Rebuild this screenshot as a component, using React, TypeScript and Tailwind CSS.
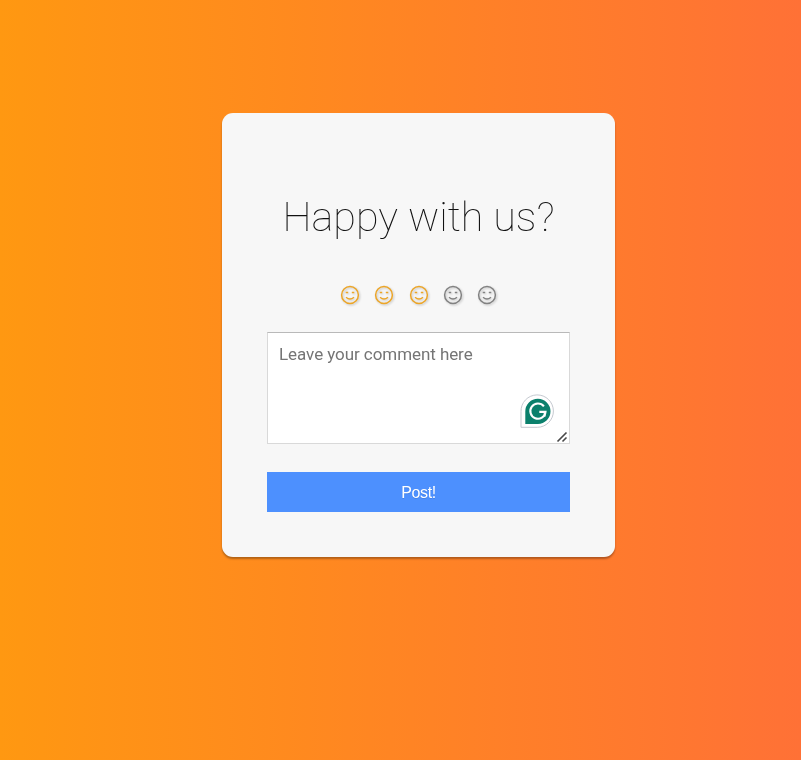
const RATING = 3;

function Smiley({ active }: { active: boolean }) {
  return (
    <svg
      viewBox="0 0 20 20"
      className={
        active
          ? "size-[20px] text-[#eca527] drop-shadow-[1px_1px_1px_rgba(0,0,0,0.22)]"
          : "size-[20px] text-[#828282] drop-shadow-[1px_1px_1px_rgba(0,0,0,0.22)]"
      }
      fill="none"
      stroke="currentColor"
      strokeWidth="1.5"
    >
      <circle cx="10" cy="10" r="8.400" />
      <path d="M6 12.200Q10 15.800 14 12.200" strokeWidth="1.300" />
      <path d="M5.700 7.600H8.200M11.800 7.600H14.300" strokeWidth="1.500" />
    </svg>
  );
}

function GrammarBadge() {
  return (
    <svg viewBox="0 0 34 34" className="absolute top-[62px] left-[253px] size-[34px]" fill="none">
      <path d="M1 33.300V17.500A16.200 16.200 0 1 1 17.200 33.300Z" fill="#fff" stroke="#c5c9d0" />
      <path d="M5.300 30V17.500A12.600 12.600 0 1 1 17.900 30Z" fill="#0b806c" />
      <path d="M23.900 12.400A7.600 7.600 0 1 0 25.500 17.900H19.300" stroke="#fff" strokeWidth="2.100" />
      <path d="M24.700 18V22.600" stroke="#fff" strokeWidth="1.800" />
    </svg>
  );
}

export default function App() {
  return (
    <main className="flex h-[760px] w-[801px] items-start bg-linear-to-r/srgb from-[#ff9811] to-[#ff7136] pt-[113px] pl-[222px] font-['Roboto',sans-serif]">
      <form className="flex h-[444px] w-[393px] flex-col rounded-[11px] bg-[#f7f7f7] px-[45px] pt-[74px] shadow-[0_2px_2px_rgba(0,0,0,0.3)] will-change-transform">
        <h1 className="text-center text-[41.300px] leading-[60px] font-thin whitespace-nowrap text-[#111]">Happy with us?</h1>
        <div className="mt-[38px] flex h-[20px] items-center justify-center gap-[14.300px]">
          {[1, 2, 3, 4, 5].map((n) => (
            <Smiley key={n} active={n <= RATING} />
          ))}
        </div>
        <div className="relative mt-[27px] h-[112px]">
          <textarea
            placeholder="Leave your comment here"
            className="block h-[112px] w-full resize-none rounded-none border border-[#d9d9d9] border-t-[#b9b9b9] bg-white px-[11px] py-[9px] text-[17px] leading-[24px] tracking-[-0.070px] outline-none placeholder:text-[#757575]"
          />
          <GrammarBadge />
          <svg viewBox="0 0 12 12" className="absolute right-[2px] bottom-[1px] size-[12px]" stroke="#484848" strokeWidth="1.600">
            <path d="M1.500 10.500L10.500 1.500M6.500 10.500L10.500 6.500" />
          </svg>
        </div>
        <button className="mt-[28px] h-[40px] bg-[#4d90fe] pt-[2px] font-['Liberation_Sans',Arial,sans-serif] text-[16px] tracking-[-0.400px] text-white [text-shadow:0_1px_rgba(0,0,0,0.1)]">
          Post!
        </button>
      </form>
    </main>
  );
}
